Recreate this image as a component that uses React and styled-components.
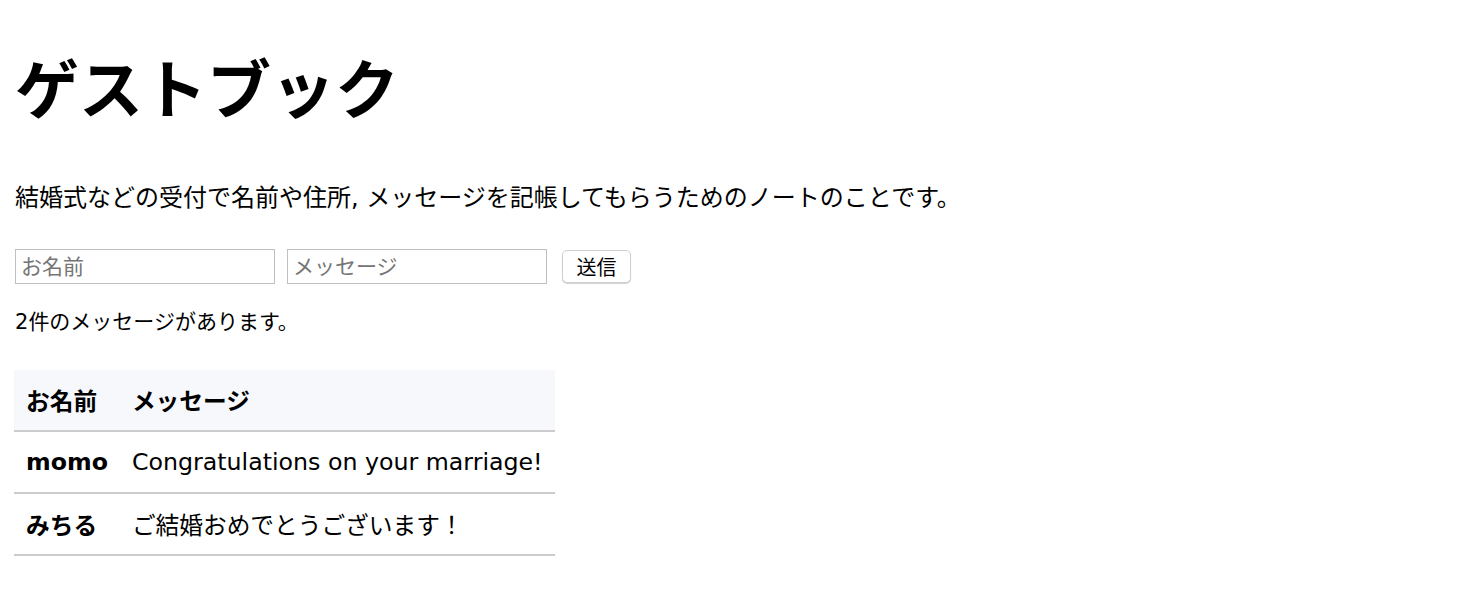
import React from "react";
import styled, { createGlobalStyle } from "styled-components";

const GlobalStyle = createGlobalStyle`
  html, body {
    margin: 0;
    padding: 0;
    background: #ffffff;
  }
  body {
    font-family: "DejaVu Sans", "Noto Sans CJK JP", sans-serif;
    color: #000000;
  }
`;

const Page = styled.main`
  padding: 47px 14px 40px;
  display: flex;
  flex-direction: column;
  align-items: flex-start;
`;

const Title = styled.h1`
  margin: 0;
  font-family: "Noto Sans CJK JP", sans-serif;
  font-size: 64px;
  line-height: 77px;
  font-weight: 700;
  padding-left: 1px;
`;

const Lead = styled.p`
  margin: 56px 0 0;
  font-size: 24px;
  line-height: 36px;
  padding-left: 1px;
`;

const Form = styled.form`
  margin-top: 33px;
  display: flex;
  align-items: center;
  padding-left: 1px;
`;

const TextInput = styled.input`
  box-sizing: border-box;
  width: 260px;
  height: 35px;
  margin-right: ${(p) => p.$gap}px;
  padding: 0 5px;
  border: 1px solid #c0c0c0;
  border-radius: 0;
  font-family: "DejaVu Sans", "Noto Sans CJK JP", sans-serif;
  font-size: 21px;
  color: #000;
  outline: none;
  &::placeholder {
    color: #757575;
  }
`;

const SendButton = styled.button`
  box-sizing: border-box;
  width: 69px;
  height: 33px;
  padding: 0;
  background: #ffffff;
  border: 1px solid #cfcfcf;
  border-radius: 5px;
  box-shadow: 0 1px 1px rgba(0, 0, 0, 0.18);
  font-family: "Noto Sans CJK JP", sans-serif;
  font-size: 20px;
  line-height: 1;
  color: #000;
  cursor: pointer;
`;

const Count = styled.p`
  margin: 23px 0 0;
  font-size: 21px;
  line-height: 30px;
  padding-left: 1px;
`;

const Table = styled.table`
  margin-top: 33px;
  border-collapse: collapse;
  border-spacing: 0;
  font-size: 23.7px;
`;

const HeadRow = styled.tr`
  background: #f7f8fc;
`;

const Cell = styled.td`
  height: 60px;
  padding: 0 12px;
  border-bottom: 2px solid #cccccc;
  text-align: left;
  vertical-align: middle;
  white-space: nowrap;
  font-weight: ${(p) => (p.$bold ? 700 : 400)};
  box-sizing: content-box;
`;

const HeadCell = styled(Cell).attrs({ as: "th" })``;

const messages = [
  { name: "momo", text: "Congratulations on your marriage!" },
  { name: "みちる", text: "ご結婚おめでとうございます！" },
];

export default function App() {
  return (
    <>
      <GlobalStyle />
      <Page>
        <Title>ゲストブック</Title>
        <Lead>
          結婚式などの受付で名前や住所, メッセージを記帳してもらうためのノートのことです。
        </Lead>
        <Form onSubmit={(e) => e.preventDefault()}>
          <TextInput placeholder="お名前" $gap={12} />
          <TextInput placeholder="メッセージ" $gap={15} />
          <SendButton type="submit">送信</SendButton>
        </Form>
        <Count>{messages.length}件のメッセージがあります。</Count>
        <Table>
          <thead>
            <HeadRow>
              <HeadCell $bold>お名前</HeadCell>
              <HeadCell $bold>メッセージ</HeadCell>
            </HeadRow>
          </thead>
          <tbody>
            {messages.map((m) => (
              <tr key={m.name}>
                <Cell $bold>{m.name}</Cell>
                <Cell>{m.text}</Cell>
              </tr>
            ))}
          </tbody>
        </Table>
      </Page>
    </>
  );
}
